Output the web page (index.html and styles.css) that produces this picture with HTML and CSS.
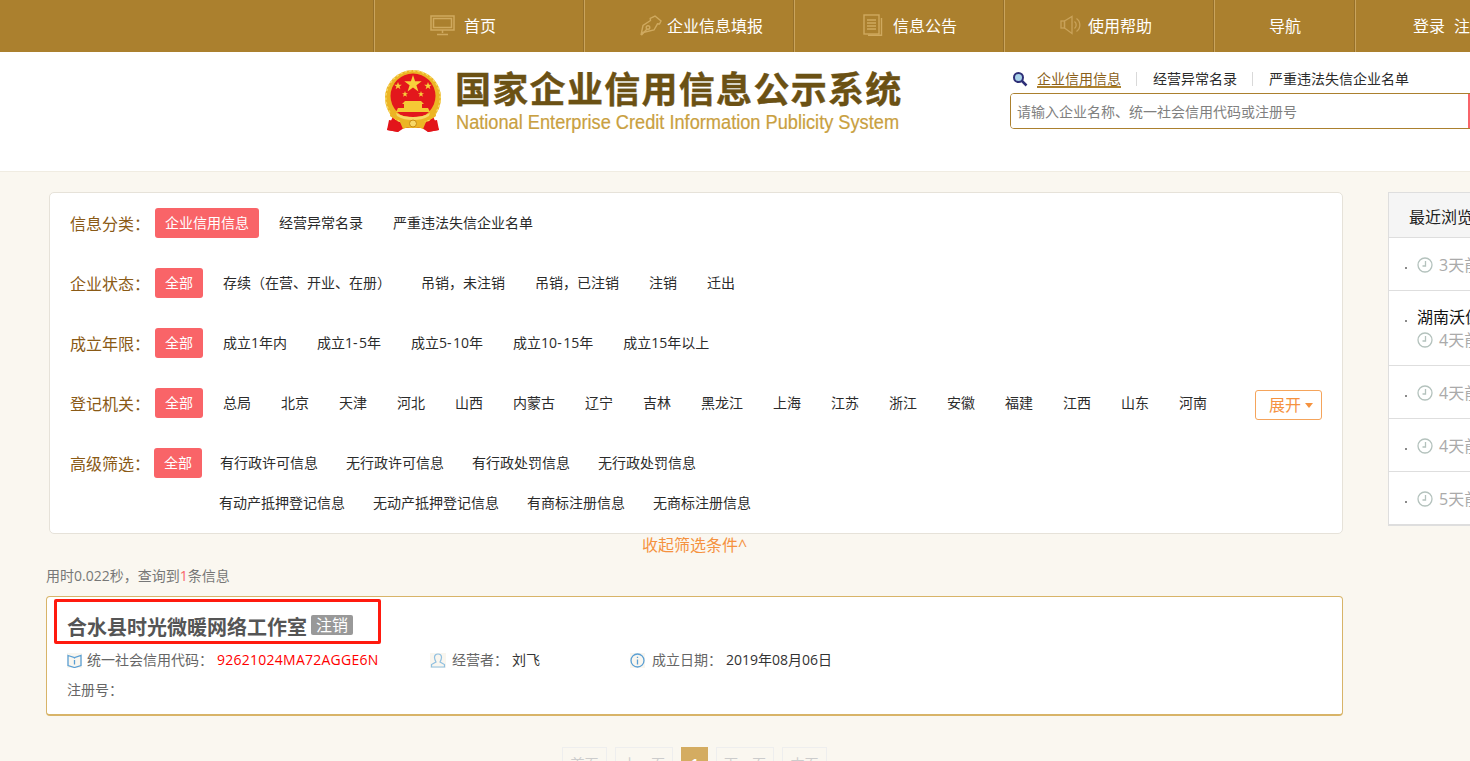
FILE: index.html
```html
<!DOCTYPE html>
<html lang="zh-CN">
<head>
<meta charset="utf-8">
<title>国家企业信用信息公示系统</title>
<link rel="stylesheet" href="styles.css">
</head>
<body>
<nav class="nav">
  <a class="nav-item nav-home">
    <svg class="nav-icon" width="25" height="21" viewBox="0 0 25 21" fill="none" stroke="#cfa95f" stroke-width="1.5"><rect x="1" y="1" width="23" height="14"/><rect x="3.500" y="3.500" width="18" height="9"/><path d="M12.500 15v3M7 19.500h11"/></svg>
    <span>首页</span>
  </a>
  <a class="nav-item nav-fill">
    <svg class="nav-icon" width="22" height="21" viewBox="0 0 22 21" fill="none" stroke="#cfa95f" stroke-width="1.400"><path d="M15 1l6 5-1.500 3-2-.2L14 15 3 17.500l-2 2.500 2-9.500 7.500-5-.3-2.200z"/><path d="M1.500 20l5.500-6"/><circle cx="8" cy="12.500" r="1.800"/></svg>
    <span>企业信息填报</span>
  </a>
  <a class="nav-item nav-notice">
    <svg class="nav-icon" width="20" height="22" viewBox="0 0 20 22" fill="none" stroke="#cfa95f" stroke-width="1.400"><rect x="1" y="1" width="15" height="19"/><path d="M18.500 4v17.300H5M4 6h9M4 9h9M4 12h9M4 15h9"/></svg>
    <span>信息公告</span>
  </a>
  <a class="nav-item nav-help">
    <svg class="nav-icon" width="22" height="20" viewBox="0 0 22 20" fill="none" stroke="#c9a25a" stroke-width="1.300"><rect x="1" y="6" width="3.500" height="7"/><path d="M4.500 6l7.500-4.500v17L4.500 13z"/><path d="M14.500 6.500a4.500 4.500 0 0 1 0 7M16.500 3.500a8 8 0 0 1 0 13"/></svg>
    <span>使用帮助</span>
  </a>
  <a class="nav-item nav-guide"><span>导航</span></a>
  <a class="nav-item nav-user"><span class="nav-login">登录</span><span>注册</span></a>
</nav>

<header class="brand-band">
  <div class="logo">
    <svg class="emblem" width="56" height="62" viewBox="0 0 56 62">
      <path d="M9 44L2 60l11 2 6-4h18l6 4 11-2-7-16z" fill="#e3141a"/>
      <circle cx="28" cy="28" r="28" fill="#ecb524"/>
      <path d="M28 .8a27.200 27.200 0 0 1 0 54.400a27.200 27.200 0 0 1 0-54.400z" fill="none" stroke="#f7d866" stroke-width="1.500" stroke-dasharray="2.500 2"/>
      <circle cx="28" cy="26" r="22.500" fill="#e3171c"/>
      <path d="M28 5l2.100 6.300h6.600l-5.300 3.900 2 6.300-5.400-3.900-5.400 3.900 2-6.300-5.300-3.900h6.600z" fill="#f8d13b"/>
      <path d="M13 12l1 2.700h2.800l-2.300 1.700.9 2.800-2.400-1.700-2.400 1.700.9-2.800-2.300-1.700H12zM43 12l1 2.700h2.800l-2.300 1.700.9 2.800-2.400-1.700-2.400 1.700.9-2.800-2.300-1.700H42zM20 21l.8 2.200H23l-1.800 1.400.7 2.200-1.900-1.400-1.900 1.400.7-2.200-1.800-1.400h2.200zM36 21l.8 2.200H39l-1.800 1.400.7 2.200-1.900-1.400-1.900 1.400.7-2.200-1.800-1.400h2.200z" fill="#f8d13b"/>
      <path d="M20 31h16l3 3H17zM19 34h18v4H19zM13 38h30l2 4H11z" fill="#f5c935"/>
      <path d="M6 39c5 6 13 8 22 8s17-2 22-8l1 7c-5 4-13 6-23 6S10 50 5 46z" fill="#ecb524"/>
      <path d="M11 43c6 3 11 4 17 4s11-1 17-4l-1 3c-5 3-10 4-16 4s-11-1-16-4z" fill="#f7d866"/>
      <path d="M4 50l11 2 3 3-5 7-11-2zM52 50l-11 2-3 3 5 7 11-2z" fill="#e3141a"/>
      <path d="M15 52c5-2 9 0 13 0s8-2 13 0l-3 7c-4-2-6-1-10-1s-6-1-10 1z" fill="#ecb524"/>
      <circle cx="28" cy="53.500" r="3.500" fill="#f7d866" stroke="#c98a10"/>
    </svg>
    <div class="logo-text">
      <div class="logo-cn">国家企业信用信息公示系统</div>
      <div class="logo-en">National Enterprise Credit Information Publicity System</div>
    </div>
  </div>
  <div class="search">
    <div class="search-tabs">
      <svg class="search-icon" width="16" height="16" viewBox="0 0 16 16" fill="none"><circle cx="6.500" cy="6.500" r="4.500" fill="#a9d3ea" stroke="#2e2f77" stroke-width="2"/><path d="M10 10l4.500 4.500" stroke="#2e2f77" stroke-width="2.500"/></svg>
      <a class="tab tab-active">企业信用信息</a>
      <i class="tab-sep"></i>
      <a class="tab">经营异常名录</a>
      <i class="tab-sep"></i>
      <a class="tab">严重违法失信企业名单</a>
    </div>
    <div class="search-box">
      <input class="search-input" type="text" placeholder="请输入企业名称、统一社会信用代码或注册号">
      <button class="search-btn" type="button"></button>
    </div>
  </div>
</header>

<div class="page">
  <main class="main">
    <section class="filters">
      <div class="f-row">
        <span class="f-label">信息分类：</span>
        <a class="chip chip-on">企业信用信息</a><a class="chip">经营异常名录</a><a class="chip">严重违法失信企业名单</a>
      </div>
      <div class="f-row">
        <span class="f-label">企业状态：</span>
        <a class="chip chip-on">全部</a><a class="chip">存续（在营、开业、在册）</a><a class="chip">吊销，未注销</a><a class="chip">吊销，已注销</a><a class="chip">注销</a><a class="chip">迁出</a>
      </div>
      <div class="f-row">
        <span class="f-label">成立年限：</span>
        <a class="chip chip-on">全部</a><a class="chip">成立1年内</a><a class="chip">成立1<span class="hy">-</span>5年</a><a class="chip">成立5<span class="hy">-</span>10年</a><a class="chip">成立10<span class="hy">-</span>15年</a><a class="chip">成立15年以上</a>
      </div>
      <div class="f-row">
        <span class="f-label">登记机关：</span>
        <a class="chip chip-on">全部</a><a class="chip">总局</a><a class="chip">北京</a><a class="chip">天津</a><a class="chip">河北</a><a class="chip">山西</a><a class="chip">内蒙古</a><a class="chip">辽宁</a><a class="chip">吉林</a><a class="chip">黑龙江</a><a class="chip">上海</a><a class="chip">江苏</a><a class="chip">浙江</a><a class="chip">安徽</a><a class="chip">福建</a><a class="chip">江西</a><a class="chip">山东</a><a class="chip">河南</a>
        <button class="expand" type="button">展开<i class="caret"></i></button>
      </div>
      <div class="f-row f-row-adv">
        <span class="f-label f-label-adv">高级筛选：</span>
        <div class="adv">
          <div class="adv-line">
            <a class="chip chip-on chip-adv-on">全部</a><a class="chip chip-adv">有行政许可信息</a><a class="chip chip-adv">无行政许可信息</a><a class="chip chip-adv">有行政处罚信息</a><a class="chip chip-adv">无行政处罚信息</a>
          </div>
          <div class="adv-line adv-line-2">
            <a class="chip chip-adv">有动产抵押登记信息</a><a class="chip chip-adv">无动产抵押登记信息</a><a class="chip chip-adv">有商标注册信息</a><a class="chip chip-adv">无商标注册信息</a>
          </div>
        </div>
      </div>
    </section>

    <div class="collapse">收起筛选条件^</div>
    <div class="stat">用时0.022秒，查询到<em class="stat-num">1</em>条信息</div>

    <article class="result">
      <div class="mark"></div>
      <h2 class="r-title">合水县时光微暖网络工作室<span class="r-badge">注销</span></h2>
      <div class="r-line">
        <div class="r-cell r-cell-code">
          <svg class="r-icon" width="15" height="15" viewBox="0 0 15 15" fill="none" stroke="#5a9fd4" stroke-width="1.300"><path d="M1 2.500l6.500 2 6.500-2v10l-6.500 2-6.500-2z"/><path d="M7.500 7v4.500M7.500 5.500v.6"/></svg>
          <span class="r-key">统一社会信用代码：</span><span class="r-code">92621024MA72AGGE6N</span>
        </div>
        <div class="r-cell r-cell-op">
          <svg class="r-icon r-icon-op" width="16" height="15" viewBox="0 0 16 15" fill="none" stroke="#8fbfe0" stroke-width="1.200"><path d="M8 1c2.500 0 3.500 2 3.500 3.500S10.500 8 10 9l4.500 2.500V14h-13v-2.500L6 9C5.500 8 4.500 6 4.500 4.500S5.500 1 8 1z"/></svg>
          <span class="r-key r-key-op">经营者：</span><span class="r-val">刘飞</span>
        </div>
        <div class="r-cell">
          <svg class="r-icon r-icon-date" width="15" height="15" viewBox="0 0 15 15" fill="none" stroke="#5a9fd4" stroke-width="1.300"><circle cx="7.500" cy="7.500" r="6.500"/><path d="M7.500 6.500v5M7.500 3.700v1.200"/></svg>
          <span class="r-key r-key-date">成立日期：</span><span class="r-val">2019年08月06日</span>
        </div>
      </div>
      <div class="r-reg">注册号：</div>
    </article>

    <div class="pager">
      <a class="pg pg-short">首页</a><a class="pg">上一页</a><a class="pg pg-on">1</a><a class="pg">下一页</a><a class="pg pg-short">末页</a>
    </div>
  </main>

  <aside class="recent">
    <h3 class="recent-head">最近浏览</h3>
    <ul class="recent-list">
      <li class="recent-item">
        <div class="recent-time">
          <svg class="clock" width="16" height="16" viewBox="0 0 16 16" fill="none" stroke="#b4c2bd" stroke-width="1.300"><circle cx="8" cy="8" r="7"/><path d="M8.500 4v5H5.500"/></svg>3天前
        </div>
      </li>
      <li class="recent-item recent-item-name">
        <div class="recent-name">湖南沃佳科技有限公司</div>
        <div class="recent-time recent-time-sub">
          <svg class="clock" width="16" height="16" viewBox="0 0 16 16" fill="none" stroke="#b4c2bd" stroke-width="1.300"><circle cx="8" cy="8" r="7"/><path d="M8.500 4v5H5.500"/></svg>4天前
        </div>
      </li>
      <li class="recent-item">
        <div class="recent-time">
          <svg class="clock" width="16" height="16" viewBox="0 0 16 16" fill="none" stroke="#b4c2bd" stroke-width="1.300"><circle cx="8" cy="8" r="7"/><path d="M8.500 4v5H5.500"/></svg>4天前
        </div>
      </li>
      <li class="recent-item">
        <div class="recent-time">
          <svg class="clock" width="16" height="16" viewBox="0 0 16 16" fill="none" stroke="#b4c2bd" stroke-width="1.300"><circle cx="8" cy="8" r="7"/><path d="M8.500 4v5H5.500"/></svg>4天前
        </div>
      </li>
      <li class="recent-item">
        <div class="recent-time">
          <svg class="clock" width="16" height="16" viewBox="0 0 16 16" fill="none" stroke="#b4c2bd" stroke-width="1.300"><circle cx="8" cy="8" r="7"/><path d="M8.500 4v5H5.500"/></svg>5天前
        </div>
      </li>
    </ul>
  </aside>
</div>
</body>
</html>
```

FILE: styles.css
```css
* { box-sizing: border-box; }
html, body { height: 761px; margin: 0; overflow: hidden; }
body {
  width: 1470px;
  background: #faf7f0;
  font-family: "Open Sans", "Noto Sans CJK SC", sans-serif;
  font-size: 14px;
  color: #333;
}
a { text-decoration: none; color: inherit; }

/* top nav */
.nav {
  display: flex;
  height: 52px;
  padding-left: 374px;
  background: #ab802e;
  color: #fff;
  font-size: 16px;
  white-space: nowrap;
  overflow: hidden;
}
.nav-item {
  display: flex;
  flex: none;
  align-items: center;
  width: 210px;
  padding-bottom: 2px;
  border-left: 1px solid #c9a45d;
  box-shadow: inset 1px 0 0 #ab802e, -1px 0 0 #96702a;
}
.nav-home { padding-left: 55px; }
.nav-fill { padding-left: 55px; }
.nav-notice { padding-left: 68px; }
.nav-help { padding-left: 55px; }
.nav-guide { width: 141px; justify-content: center; }
.nav-user { width: 200px; padding-left: 57px; }
.nav-login { margin-right: 9px; }
.nav-home .nav-icon { margin-right: 9px; }
.nav-fill .nav-icon { margin-right: 5px; }
.nav-notice .nav-icon { margin-right: 10px; }
.nav-help .nav-icon { margin-right: 6px; }

/* brand */
.brand-band {
  display: flex;
  height: 120px;
  padding-left: 385px;
  background: #fff;
  border-bottom: 1px solid #f0ece2;
  overflow: hidden;
}
.logo { display: flex; flex: none; width: 625px; padding-top: 18px; }
.emblem { flex: none; margin-right: 14px; }
.logo-text { flex: none; }
.logo-cn {
  height: 40px;
  margin-top: -3px;
  color: #6b5114;
  font-family: "Noto Sans CJK SC", sans-serif;
  font-size: 36px;
  font-weight: 700;
  line-height: 40px;
  letter-spacing: 1.3px;
  white-space: nowrap;
  -webkit-text-stroke: .4px #6b5114;
}
.logo-en {
  margin-top: 3px;
  margin-left: 1px;
  color: #c9a040;
  font-family: "Liberation Sans", Arial, sans-serif;
  font-size: 20px;
  line-height: 24px;
  white-space: nowrap;
  transform: scaleX(.91);
  transform-origin: left center;
  -webkit-text-stroke: .2px #c9a040;
}
.search { flex: none; width: 560px; padding-top: 17px; }
.search-tabs { display: flex; align-items: center; height: 20px; padding-left: 2px; color: #2b2b2b; white-space: nowrap; }
.search-icon { margin-right: 9px; }
.tab { line-height: 20px; }
.tab-active { color: #8a5f1a; border-bottom: 2px solid #ab802e; height: 18px; line-height: 17px; }
.tab-sep { width: 1px; height: 14px; margin: 0 16px 0 15px; background: #d9d9d9; }
.search-box {
  display: flex;
  width: 560px;
  height: 36px;
  margin-top: 4px;
  border: 1px solid #ab802e;
  border-radius: 4px;
  overflow: hidden;
}
.search-input {
  flex: none;
  width: 457px;
  height: 34px;
  padding: 0 0 0 6px;
  border: 0;
  outline: 0;
  background: #fff;
  font: 14px "Open Sans", "Noto Sans CJK SC", sans-serif;
  color: #333;
}
.search-input::placeholder { color: #808080; opacity: 1; }
.search-btn { flex: 1; border: 0; background: #f9646a; }

/* page */
.page { display: flex; align-items: flex-start; padding: 20px 0 0 46px; width: 1800px; }
.main { flex: none; width: 1297px; }

.filters {
  margin-left: 3px;
  padding: 15px 20px 15px 20px;
  background: #fff;
  border: 1px solid #e6e2d9;
  border-radius: 5px;
}
.f-row { display: flex; align-items: center; height: 30px; margin-bottom: 30px; white-space: nowrap; }
.f-row-adv { height: 70px; margin-bottom: 0; align-items: flex-start; }
.f-label { flex: none; width: 85px; padding-top: 4px; color: #8a5a16; font-size: 16px; line-height: 24px; height: 30px; }
.f-label-adv { width: 84px; }
.chip { flex: none; height: 30px; margin-right: 10px; padding: 0 10px; color: #2b2b2b; line-height: 30px; border-radius: 3px; }
.chip-on { background: #f96468; color: #fff; }
.chip-adv { padding: 0 9px; }
.chip-adv-on { margin-right: 9px; padding: 0 10px; }
.hy { letter-spacing: 1.5px; }
.adv { display: flex; flex-direction: column; gap: 10px; }
.adv-line { display: flex; height: 30px; }
.adv-line-2 { padding-left: 56px; }
.expand {
  flex: none;
  align-self: flex-start;
  width: 67px;
  height: 30px;
  margin: 2px 0 0 auto;
  padding: 0 0 0 13px;
  border: 1px solid #f5a45b;
  border-radius: 3px;
  background: #fff;
  color: #f5923f;
  font: 16px/28px "Open Sans", "Noto Sans CJK SC", sans-serif;
  text-align: left;
}
.caret {
  display: inline-block;
  margin-left: 4px;
  vertical-align: 3px;
  border-top: 5px solid #f5923f;
  border-left: 4px solid transparent;
  border-right: 4px solid transparent;
}
.collapse { height: 22px; margin-top: 1px; padding-left: 596px; color: #f5923f; font-size: 16px; line-height: 20px; }
.stat { height: 20px; margin-top: 9px; color: #777; line-height: 20px; }
.stat-num { color: #f96468; font-style: normal; }

.result {
  position: relative;
  height: 120px;
  margin-top: 10px;
  padding: 0 20px;
  background: #fff;
  border: 1px solid #d8b468;
  border-bottom-width: 2px;
  border-radius: 4px;
}
.mark {
  position: absolute;
  left: 7px;
  top: 2px;
  width: 327px;
  height: 45px;
  border: 3px solid #ff1a0f;
  border-radius: 2px;
}
.r-title {
  display: flex;
  align-items: center;
  height: 30px;
  margin: 16px 0 0;
  color: #555;
  font-size: 20px;
  font-weight: 700;
  line-height: 30px;
  white-space: nowrap;
}
.r-badge {
  width: 42px;
  height: 20px;
  margin: -6px 0 0 4px;
  background: #999;
  border-radius: 2px;
  color: #fff;
  font-size: 16px;
  font-weight: 400;
  line-height: 20px;
  text-align: center;
}
.r-line { display: flex; height: 20px; margin-top: 7px; white-space: nowrap; }
.r-cell { display: flex; flex: none; align-items: center; line-height: 20px; }
.r-cell-code { width: 363px; }
.r-cell-op { width: 200px; }
.r-icon { flex: none; margin-right: 5px; background: #f9f6ef; }
.r-icon-op { margin-right: 6px; }
.r-icon-date { margin-right: 7px; }
.r-key { width: 130px; color: #666; }
.r-key-op { width: 60px; }
.r-key-date { width: 74px; }
.r-code { color: #f00; letter-spacing: .25px; }
.r-val { color: #333; }
.r-reg { margin-top: 10px; color: #666; line-height: 20px; }

.pager { display: flex; justify-content: center; gap: 8px; margin-top: 31px; }
.pg {
  flex: none;
  width: 58px;
  height: 32px;
  border: 1px solid #eee;
  color: #ccc;
  line-height: 32px;
  text-align: center;
}
.pg-short { width: 45px; }
.pg-on { width: 27px; background: #d4ac61; border-color: #d4ac61; color: #fff; font-weight: 700; }

/* recent panel */
.recent {
  flex: none;
  width: 300px;
  margin-left: 45px;
  background: #fff;
  border: 1px solid #dedede;
  border-right: 0;
  white-space: nowrap;
}
.recent-head {
  height: 45px;
  margin: 0;
  padding-left: 20px;
  background: #f5f5f5;
  border-bottom: 1px solid #dedede;
  color: #222;
  font-size: 16px;
  font-weight: 400;
  line-height: 48px;
}
.recent-list { margin: 0; padding: 0; list-style: none; }
.recent-item {
  position: relative;
  height: 53px;
  padding: 15px 0 0 28px;
  border-bottom: 1px solid #dedede;
  font-size: 16px;
}
.recent-item::before {
  content: "";
  position: absolute;
  left: 16px;
  top: 29px;
  width: 2px;
  height: 2px;
  background: #8a8a8a;
}
.recent-item-name { height: 75px; padding-top: 14px; }
.recent-name { height: 24px; color: #111; line-height: 24px; }
.recent-time { display: flex; align-items: center; height: 24px; color: #aaa; line-height: 24px; }
.recent-time-sub { margin-top: -1px; }
.clock { flex: none; margin-right: 6px; }
```
